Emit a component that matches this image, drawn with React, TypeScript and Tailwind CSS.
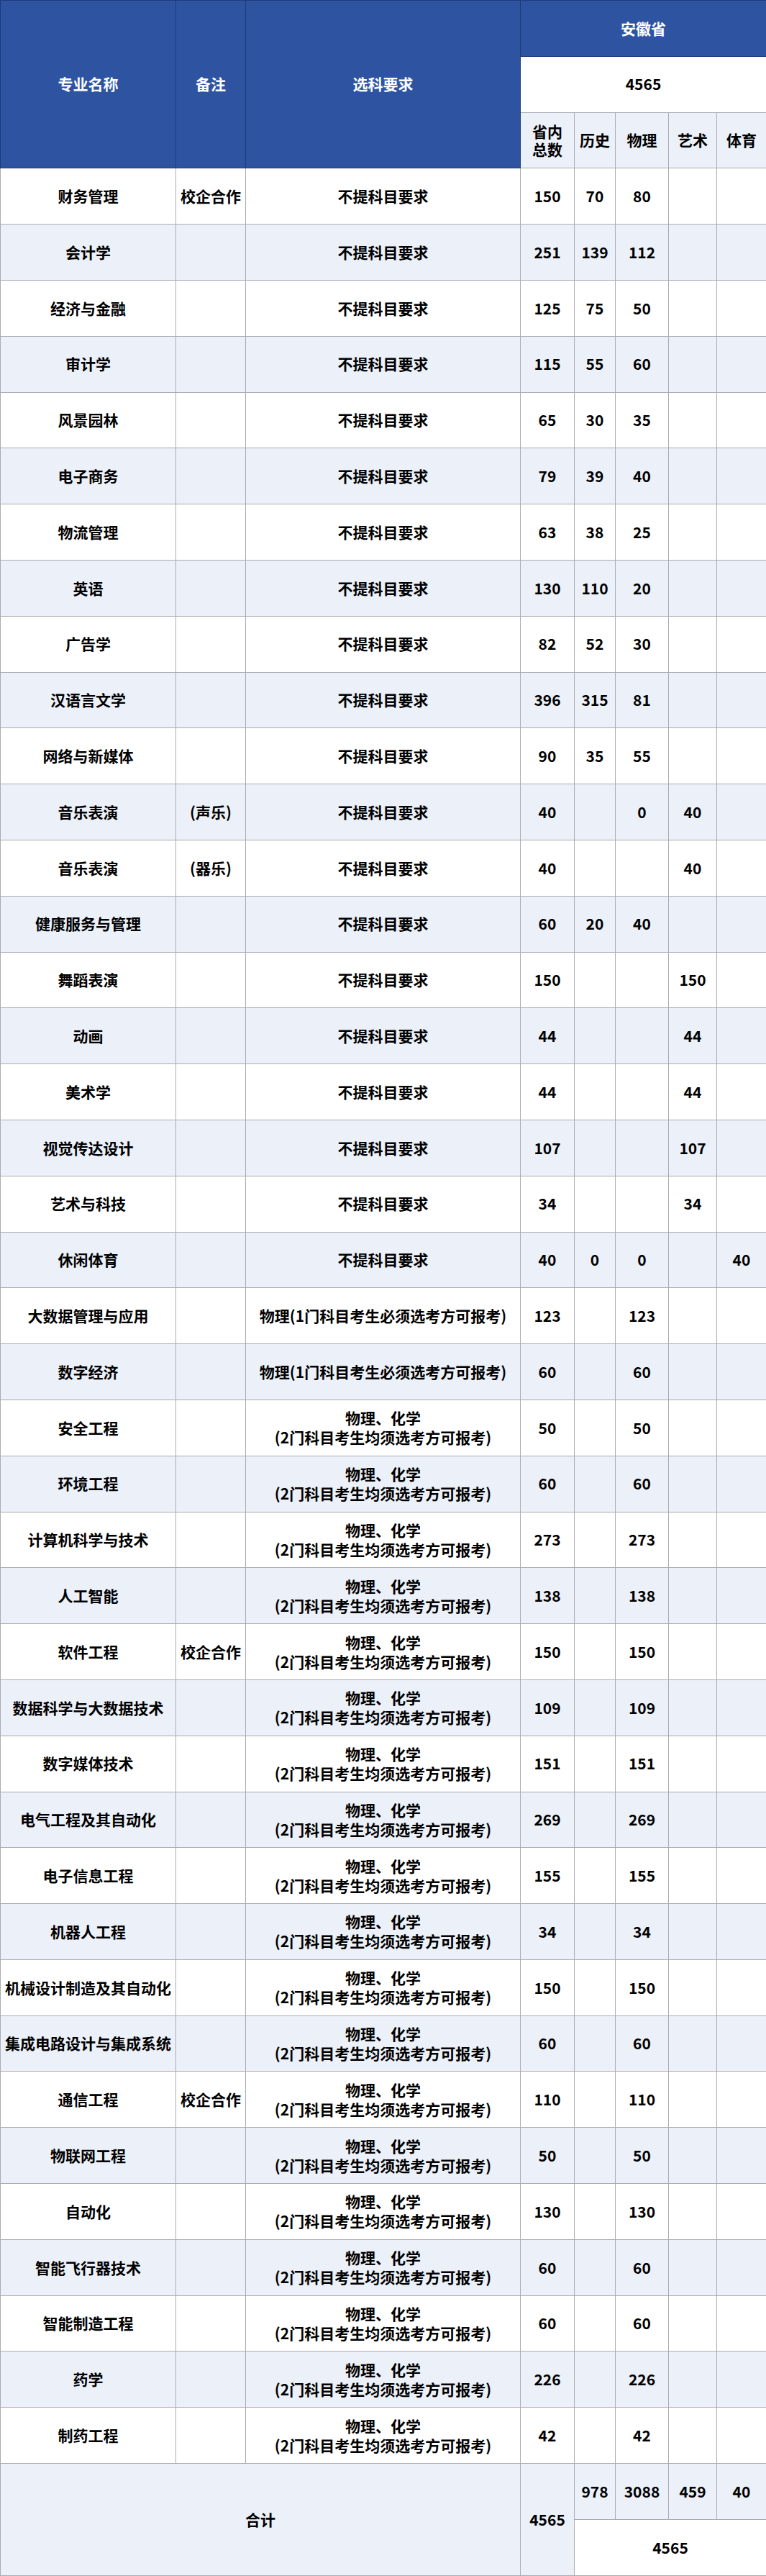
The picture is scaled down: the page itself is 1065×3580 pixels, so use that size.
import React from "react";

type Row = [string, string, number, string, string, string, string, string];
// name, note, reqType (0: 不提, 1: 物理1门, 2: 物理化学), total, hist, phys, art, pe
const rows: Row[] = [
  ["财务管理", "校企合作", 0, "150", "70", "80", "", ""],
  ["会计学", "", 0, "251", "139", "112", "", ""],
  ["经济与金融", "", 0, "125", "75", "50", "", ""],
  ["审计学", "", 0, "115", "55", "60", "", ""],
  ["风景园林", "", 0, "65", "30", "35", "", ""],
  ["电子商务", "", 0, "79", "39", "40", "", ""],
  ["物流管理", "", 0, "63", "38", "25", "", ""],
  ["英语", "", 0, "130", "110", "20", "", ""],
  ["广告学", "", 0, "82", "52", "30", "", ""],
  ["汉语言文学", "", 0, "396", "315", "81", "", ""],
  ["网络与新媒体", "", 0, "90", "35", "55", "", ""],
  ["音乐表演", "(声乐)", 0, "40", "", "0", "40", ""],
  ["音乐表演", "(器乐)", 0, "40", "", "", "40", ""],
  ["健康服务与管理", "", 0, "60", "20", "40", "", ""],
  ["舞蹈表演", "", 0, "150", "", "", "150", ""],
  ["动画", "", 0, "44", "", "", "44", ""],
  ["美术学", "", 0, "44", "", "", "44", ""],
  ["视觉传达设计", "", 0, "107", "", "", "107", ""],
  ["艺术与科技", "", 0, "34", "", "", "34", ""],
  ["休闲体育", "", 0, "40", "0", "0", "", "40"],
  ["大数据管理与应用", "", 1, "123", "", "123", "", ""],
  ["数字经济", "", 1, "60", "", "60", "", ""],
  ["安全工程", "", 2, "50", "", "50", "", ""],
  ["环境工程", "", 2, "60", "", "60", "", ""],
  ["计算机科学与技术", "", 2, "273", "", "273", "", ""],
  ["人工智能", "", 2, "138", "", "138", "", ""],
  ["软件工程", "校企合作", 2, "150", "", "150", "", ""],
  ["数据科学与大数据技术", "", 2, "109", "", "109", "", ""],
  ["数字媒体技术", "", 2, "151", "", "151", "", ""],
  ["电气工程及其自动化", "", 2, "269", "", "269", "", ""],
  ["电子信息工程", "", 2, "155", "", "155", "", ""],
  ["机器人工程", "", 2, "34", "", "34", "", ""],
  ["机械设计制造及其自动化", "", 2, "150", "", "150", "", ""],
  ["集成电路设计与集成系统", "", 2, "60", "", "60", "", ""],
  ["通信工程", "校企合作", 2, "110", "", "110", "", ""],
  ["物联网工程", "", 2, "50", "", "50", "", ""],
  ["自动化", "", 2, "130", "", "130", "", ""],
  ["智能飞行器技术", "", 2, "60", "", "60", "", ""],
  ["智能制造工程", "", 2, "60", "", "60", "", ""],
  ["药学", "", 2, "226", "", "226", "", ""],
  ["制药工程", "", 2, "42", "", "42", "", ""],
];

function Req({ t }: { t: number }) {
  if (t === 0) return <>不提科目要求</>;
  if (t === 1) return <>物理(1门科目考生必须选考方可报考)</>;
  return (
    <div className="leading-[27px]">
      物理、化学
      <br />
      (2门科目考生均须选考方可报考)
    </div>
  );
}

const td = "border border-[#ababb3] text-center align-middle p-0";
const th = "border border-[#1e3a7a] text-center align-middle p-0 text-white";

export default function App() {
  return (
    <div
      className="w-[1065px] bg-white text-black font-bold text-[21px]"
      style={{ fontFamily: '"Noto Sans CJK SC", "Noto Sans", sans-serif' }}
    >
      <table className="w-[1065px] table-fixed border-collapse">
        <colgroup>
          <col className="w-[244px]" />
          <col className="w-[97px]" />
          <col className="w-[382px]" />
          <col className="w-[75px]" />
          <col className="w-[57px]" />
          <col className="w-[74px]" />
          <col className="w-[67px]" />
          <col className="w-[69px]" />
        </colgroup>
        <thead>
          <tr className="h-[77.8px]">
            <th rowSpan={3} className={`${th} bg-[#2e54a1]`}>专业名称</th>
            <th rowSpan={3} className={`${th} bg-[#2e54a1]`}>备注</th>
            <th rowSpan={3} className={`${th} bg-[#2e54a1]`}>选科要求</th>
            <th colSpan={5} className={`${th} bg-[#2e54a1]`}>安徽省</th>
          </tr>
          <tr className="h-[77.8px]">
            <th colSpan={5} className={`${td} bg-white`}>4565</th>
          </tr>
          <tr className="h-[77.8px] bg-[#ebf0f9]">
            <th className={`${td} leading-[25px]`}>
              省内
              <br />
              总数
            </th>
            <th className={td}>历史</th>
            <th className={td}>物理</th>
            <th className={td}>艺术</th>
            <th className={td}>体育</th>
          </tr>
        </thead>
        <tbody>
          {rows.map((r, i) => (
            <tr key={i} className={`h-[77.8px] ${i % 2 === 1 ? "bg-[#ebf0f9]" : "bg-white"}`}>
              <td className={`${td} whitespace-nowrap`}>{r[0]}</td>
              <td className={`${td} whitespace-nowrap`}>{r[1]}</td>
              <td className={`${td} whitespace-nowrap`}>
                <Req t={r[2] as number} />
              </td>
              <td className={td}>{r[3]}</td>
              <td className={td}>{r[4]}</td>
              <td className={td}>{r[5]}</td>
              <td className={td}>{r[6]}</td>
              <td className={td}>{r[7]}</td>
            </tr>
          ))}
          <tr className="h-[77.8px] bg-[#ebf0f9]">
            <td colSpan={3} rowSpan={2} className={td}>合计</td>
            <td rowSpan={2} className={td}>4565</td>
            <td className={td}>978</td>
            <td className={td}>3088</td>
            <td className={td}>459</td>
            <td className={td}>40</td>
          </tr>
          <tr className="h-[77.8px]">
            <td colSpan={4} className={`${td} bg-white`}>4565</td>
          </tr>
        </tbody>
      </table>
    </div>
  );
}
